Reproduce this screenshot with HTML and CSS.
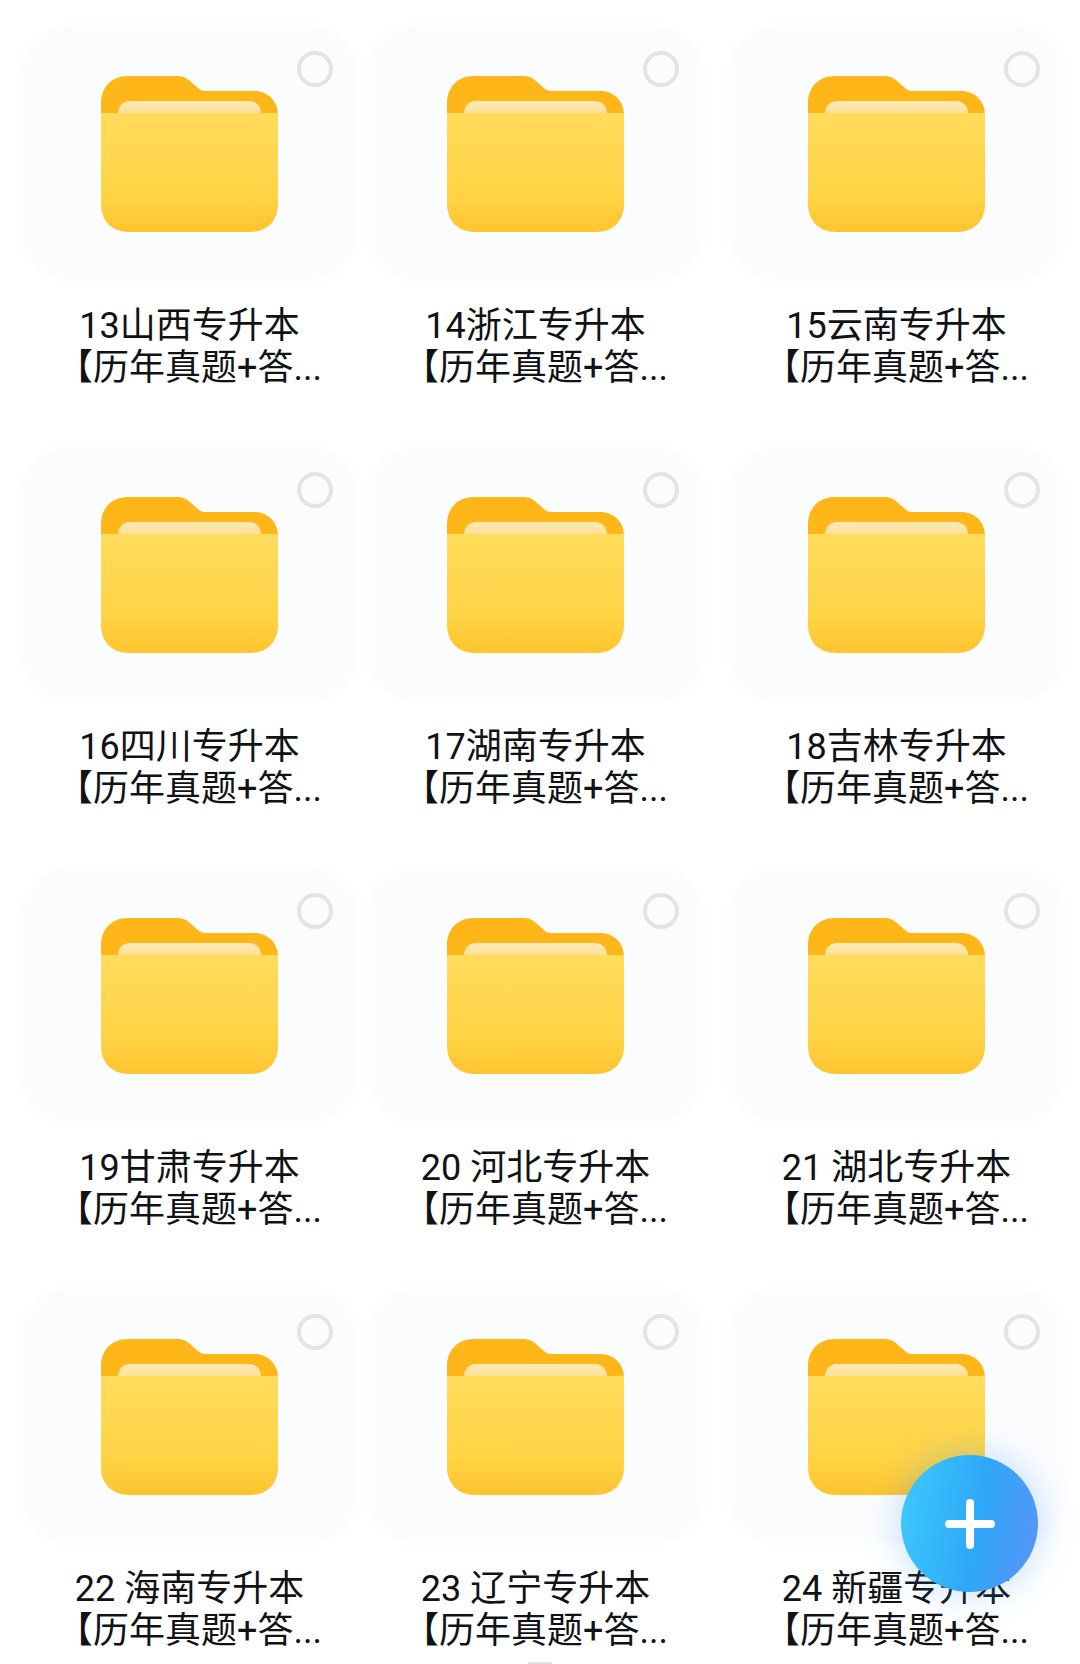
FILE: index.html
```html
<!DOCTYPE html>
<html lang="zh-CN">
<head>
    <meta charset="UTF-8">
    <title>专升本</title>
    <link rel="stylesheet" href="styles.css">
</head>
<body>
    <svg class="defs" width="0" height="0">
        <defs>
            <linearGradient id="front" x1="0" y1="0" x2="0" y2="1">
                <stop offset="0" stop-color="#ffdc5c"/>
                <stop offset="0.7" stop-color="#ffd344"/>
                <stop offset="1" stop-color="#ffc42e"/>
            </linearGradient>
            <linearGradient id="paper" x1="0" y1="0" x2="0" y2="1">
                <stop offset="0" stop-color="#fdeab8"/>
                <stop offset="1" stop-color="#ffd574"/>
            </linearGradient>
            <symbol id="folder" viewBox="0 0 177 157">
                <path d="M0 28C0 12 11 1 27 1H76C82 1 86 3 90 7L97 13C99 15 101 16 104 16H153C167 16 177 26 177 40V60H0Z" fill="#ffb618"/>
                <path d="M17 38C17 31 22 26 29 26H148C155 26 160 31 160 38V50H17Z" fill="url(#paper)"/>
                <path d="M0 38H177V129C177 146 166 157 149 157H28C11 157 0 146 0 129Z" fill="url(#front)"/>
            </symbol>
        </defs>
    </svg>

    <div class="grid">
        <div class="item">
            <div class="thumb"><svg class="folder"><use href="#folder"/></svg><span class="check"></span></div>
            <p class="name">13山西专升本</p>
            <p class="sub">【历年真题+答...</p>
        </div>
        <div class="item">
            <div class="thumb"><svg class="folder"><use href="#folder"/></svg><span class="check"></span></div>
            <p class="name">14浙江专升本</p>
            <p class="sub">【历年真题+答...</p>
        </div>
        <div class="item">
            <div class="thumb"><svg class="folder"><use href="#folder"/></svg><span class="check"></span></div>
            <p class="name">15云南专升本</p>
            <p class="sub">【历年真题+答...</p>
        </div>
        <div class="item">
            <div class="thumb"><svg class="folder"><use href="#folder"/></svg><span class="check"></span></div>
            <p class="name">16四川专升本</p>
            <p class="sub">【历年真题+答...</p>
        </div>
        <div class="item">
            <div class="thumb"><svg class="folder"><use href="#folder"/></svg><span class="check"></span></div>
            <p class="name">17湖南专升本</p>
            <p class="sub">【历年真题+答...</p>
        </div>
        <div class="item">
            <div class="thumb"><svg class="folder"><use href="#folder"/></svg><span class="check"></span></div>
            <p class="name">18吉林专升本</p>
            <p class="sub">【历年真题+答...</p>
        </div>
        <div class="item">
            <div class="thumb"><svg class="folder"><use href="#folder"/></svg><span class="check"></span></div>
            <p class="name">19甘肃专升本</p>
            <p class="sub">【历年真题+答...</p>
        </div>
        <div class="item">
            <div class="thumb"><svg class="folder"><use href="#folder"/></svg><span class="check"></span></div>
            <p class="name">20 河北专升本</p>
            <p class="sub">【历年真题+答...</p>
        </div>
        <div class="item">
            <div class="thumb"><svg class="folder"><use href="#folder"/></svg><span class="check"></span></div>
            <p class="name">21 湖北专升本</p>
            <p class="sub">【历年真题+答...</p>
        </div>
        <div class="item">
            <div class="thumb"><svg class="folder"><use href="#folder"/></svg><span class="check"></span></div>
            <p class="name">22 海南专升本</p>
            <p class="sub">【历年真题+答...</p>
        </div>
        <div class="item">
            <div class="thumb"><svg class="folder"><use href="#folder"/></svg><span class="check"></span></div>
            <p class="name">23 辽宁专升本</p>
            <p class="sub">【历年真题+答...</p>
        </div>
        <div class="item">
            <div class="thumb"><svg class="folder"><use href="#folder"/></svg><span class="check"></span></div>
            <p class="name">24 新疆专升本</p>
            <p class="sub">【历年真题+答...</p>
        </div>
    </div>

    <button class="fab" aria-label="新建">
        <svg width="50" height="50" viewBox="0 0 50 50"><path d="M25 4V46M4 25H46" stroke="#fff" stroke-width="8" stroke-linecap="round"/></svg>
    </button>
    <div class="home-bar"></div>
</body>
</html>
```

FILE: styles.css
```css
html, body {
    margin: 0;
    padding: 0;
    background: #ffffff;
}

body {
    width: 1080px;
    height: 1664px;
    overflow: hidden;
    position: relative;
    font-family: Roboto, "Noto Sans CJK SC", "Noto Sans", sans-serif;
    color: #111216;
}

.defs {
    display: block;
    height: 0;
}

.grid {
    display: grid;
    grid-template-columns: 346px 361px 333px;
    grid-auto-rows: 421px;
    padding: 27px 0 0 23px;
}

.item {
    width: 333px;
    text-align: center;
}

.thumb {
    position: relative;
    height: 252px;
    padding-top: 48px;
    box-sizing: border-box;
    background: #fbfcfe;
    border-radius: 46px;
    box-shadow: 0 0 10px 3px #fcfdfe;
}

.folder {
    display: block;
    width: 177px;
    height: 157px;
    margin: 0 auto;
}

.check {
    position: absolute;
    top: 24px;
    right: 23px;
    width: 36px;
    height: 36px;
    box-sizing: border-box;
    border: 4px solid #e3e4e7;
    border-radius: 50%;
}

.name,
.sub {
    margin: 0;
    font-size: 36px;
    font-weight: 400;
    line-height: 42px;
    white-space: nowrap;
}

.name {
    margin-top: 26px;
}

.fab {
    position: absolute;
    left: 901px;
    top: 1455px;
    width: 137px;
    height: 137px;
    display: flex;
    align-items: center;
    justify-content: center;
    padding: 0;
    border: none;
    border-radius: 50%;
    background: linear-gradient(100deg, #3dcbfc 0%, #2ea8f9 55%, #5d92f8 100%);
    box-shadow: 0 0 30px 6px rgba(70, 160, 250, 0.25);
}

.home-bar {
    position: absolute;
    left: 528px;
    bottom: 0;
    width: 24px;
    height: 2px;
    background: #e2e2e2;
}
```
